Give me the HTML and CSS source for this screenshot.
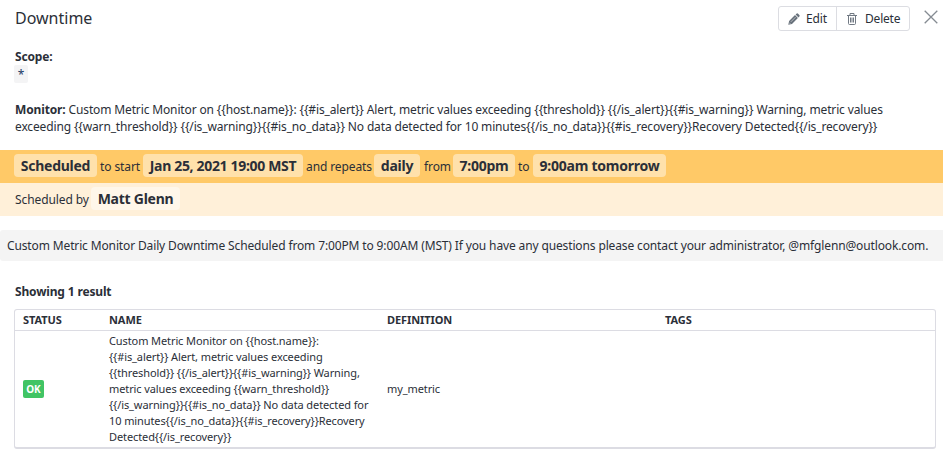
FILE: index.html
```html
<!DOCTYPE html>
<html lang="en">
<head>
<meta charset="utf-8">
<title>Downtime</title>
<link rel="stylesheet" href="styles.css">
</head>
<body>
<header class="header">
  <h1 class="title">Downtime</h1>
  <div class="actions">
    <button class="btn edit"><svg width="12" height="12" viewBox="0 0 12 12"><path fill="#68717b" d="M.3 11.7l.8-3.7L7 2.1l2.9 2.9L4 10.9zM7.6 1.5l.8-.8q.9-.8 1.7 0l1.2 1.2q.8.8 0 1.7l-.8.8z"/><path stroke="#fff" stroke-width=".5" d="M2.8 8.9l4.8-4.8M1.1 9.6l1.4 1.4"/></svg><span>Edit</span></button>
    <button class="btn delete"><svg width="10" height="12" viewBox="0 0 10 12" fill="none" stroke="#717983"><path d="M0 2.5h10M3 2V.5h4V2M1.5 3v7.5q0 1 1 1h5q1 0 1-1V3M3.5 4.5v5M5 4.5v5M6.5 4.5v5"/></svg><span>Delete</span></button>
  </div>
  <button class="close" aria-label="Close"><svg width="14" height="14" viewBox="0 0 14 14" fill="none" stroke="#858b92" stroke-width="1.3"><path d="M.7.7l12.6 12.6M13.3.7L.7 13.3"/></svg></button>
</header>
<section class="scope"><b>Scope:</b><div><span class="scope-tag">*</span></div></section>
<section class="monitor">
  <div class="m1"><b>Monitor:</b> Custom Metric Monitor on {{host.name}}: {{#is_alert}} Alert, metric values exceeding {{threshold}} {{/is_alert}}{{#is_warning}} Warning, metric values</div>
  <div class="m2">exceeding {{warn_threshold}} {{/is_warning}}{{#is_no_data}} No data detected for 10 minutes{{/is_no_data}}{{#is_recovery}}Recovery Detected{{/is_recovery}}</div>
</section>
<section class="band schedule">
  <b class="chip c1">Scheduled</b><span class="w1">to start</span><b class="chip c2">Jan 25, 2021 19:00 MST</b><span class="w2">and repeats</span><b class="chip c3">daily</b><span class="w3">from</span><b class="chip c4">7:00pm</b><span class="w4">to</span><b class="chip c5">9:00am tomorrow</b>
</section>
<section class="band author"><span class="w5">Scheduled by</span><b class="chip c6">Matt Glenn</b></section>
<p class="message"><span>Custom Metric Monitor Daily Downtime Scheduled from 7:00PM to 9:00AM (MST) If you have any questions please contact your administrator, @mfglenn@outlook.com.</span></p>
<h2 class="results">Showing 1 result</h2>
<div class="table">
  <div class="row head"><span>STATUS</span><span>NAME</span><span>DEFINITION</span><span>TAGS</span></div>
  <div class="row body">
    <div><span class="ok">OK</span></div>
    <div class="name">Custom Metric Monitor on {{host.name}}:<br>{{#is_alert}} Alert, metric values exceeding<br>{{threshold}} {{/is_alert}}{{#is_warning}} Warning,<br>metric values exceeding {{warn_threshold}}<br>{{/is_warning}}{{#is_no_data}} No data detected for<br>10 minutes{{/is_no_data}}{{#is_recovery}}Recovery<br>Detected{{/is_recovery}}</div>
    <div class="definition">my_metric</div>
    <div></div>
  </div>
</div>
</body>
</html>
```
FILE: styles.css
```css
* { box-sizing: border-box; }
body {
  margin: 0;
  height: 453px;
  overflow: hidden;
  background: #fff;
  color: #2b2f38;
  font: 12px/17px "Noto Sans", "Open Sans", sans-serif;
  white-space: nowrap;
}
.header { display: flex; height: 48px; padding: 6px 5px 0 15px; align-items: flex-start; }
.title { margin: 0 auto 0 0; font-size: 16px; font-weight: 400; line-height: 24px; }
.actions { display: flex; height: 25px; border: 1px solid #dcdde2; border-radius: 3px; }
.btn { display: flex; align-items: center; padding: 0; border: 0; background: none; color: inherit; font: inherit; letter-spacing: -.1px; }
.edit { width: 57px; padding-left: 9px; gap: 6px; }
.delete { width: 73px; padding-left: 10px; gap: 8px; border-left: 1px solid #dcdde2; letter-spacing: -.2px; }
.close { display: flex; margin: 4px 0 0 14px; padding: 0; border: 0; background: none; }
.scope { height: 53px; padding-left: 15px; letter-spacing: -.15px; }
.scope-tag { display: block; width: 14px; height: 18px; margin-left: -1px; border-radius: 2px; background: #f4f4f5; color: #1b3a66; line-height: 20px; text-align: center; }
.monitor { height: 49px; padding-left: 15px; }
.m1 { letter-spacing: -.136px; }
.m2 { letter-spacing: -.144px; }
.band { display: flex; align-items: center; height: 33px; padding-left: 14px; letter-spacing: -.1px; }
.schedule { background: #ffc967; }
.author { background: #fff0d9; padding-left: 15px; }
.chip { height: 23px; border-radius: 4px; background: rgba(255, 255, 255, .45); font-size: 14px; line-height: 23px; text-align: center; margin-bottom: 2px; letter-spacing: -.25px; }
.c1 { width: 83px; }
.w1 { width: 46px; padding-left: 3px; }
.c2 { width: 160px; letter-spacing: -.33px; }
.w2 { width: 71px; padding-left: 3px; }
.c3 { width: 46px; }
.w3 { width: 33px; padding-left: 4px; }
.c4 { width: 62px; }
.w4 { width: 18px; padding-left: 3px; }
.c5 { width: 133px; }
.w5 { width: 76px; }
.c6 { width: 89px; }
.message { height: 31px; margin: 14px 0 0; padding-left: 7px; border-radius: 3px 0 0 3px; background: #f4f4f4; line-height: 31px; letter-spacing: -.134px; }
.results { margin: 22px 0 0 15px; font-size: 12px; line-height: 17px; letter-spacing: -.16px; }
.table { width: 922px; height: 140px; margin: 9px 0 0 14px; border: 1px solid #dcdce3; border-bottom-width: 2px; border-radius: 3px; }
.row { display: grid; grid-template-columns: 86px 278px 278px 1fr; padding-left: 8px; align-items: center; }
.head { height: 21px; border-bottom: 1px solid #dcdce3; font-size: 11px; font-weight: 700; line-height: 20px; letter-spacing: -.08px; }
.body { height: 116px; font-size: 11px; letter-spacing: -.1px; }
.name { line-height: 16px; }
.definition { line-height: 16px; }
.ok { display: block; width: 21px; height: 18px; border-radius: 2px; background: #41c464; color: #fff; font-size: 10px; font-weight: 700; line-height: 18px; text-align: center; }
```
